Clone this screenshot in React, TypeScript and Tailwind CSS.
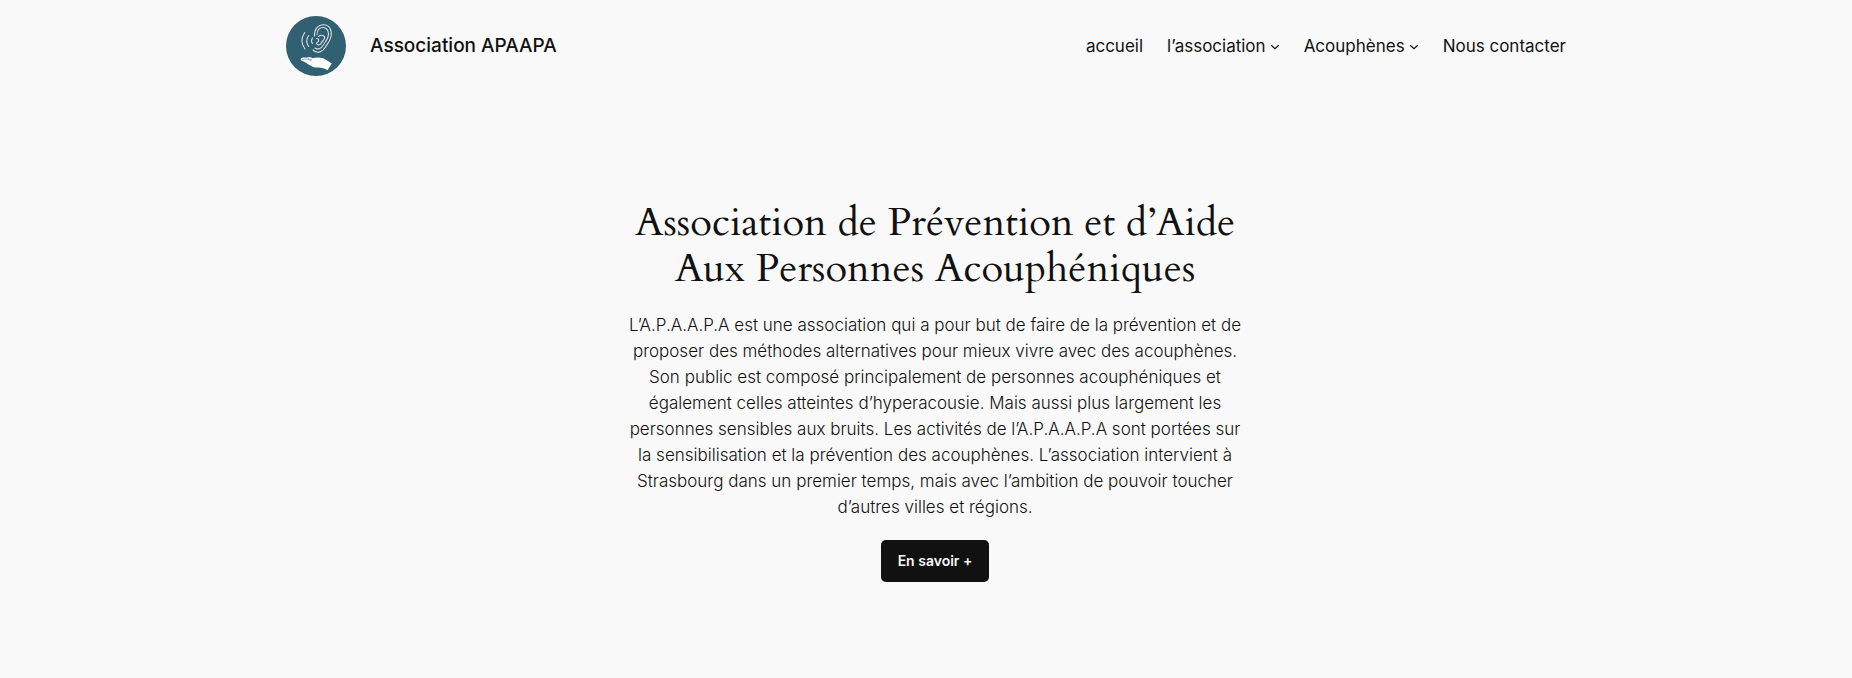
const links = [
  { label: "accueil", submenu: false },
  { label: "l’association", submenu: true },
  { label: "Acouphènes", submenu: true },
  { label: "Nous contacter", submenu: false },
];

function Logo() {
  return (
    <svg viewBox="0 0 60 60" className="size-[60px] shrink-0" role="img" aria-label="Association APAAPA">
      <circle cx="30" cy="30" r="30" fill="#306071" />
      <g fill="none" stroke="#d3dee2" strokeWidth="1.1" strokeLinecap="round">
        <path d="M28.500 20C28 13.500 32 8.700 37.500 8.700C43.500 8.700 46.300 14 45 20.500C44.300 25 42 27 39.500 31C37 35.500 31.500 38.500 27 34" />
        <path d="M31 18.500C31 13.500 34 11.300 37.500 11.500C42 12 43.300 17 42 21C41 24.500 38.500 26.500 37 29.500C35 33 31.500 33.700 29 32" />
        <path d="M32.500 20.500C35 18 39.500 19.500 38.500 22.500C37.500 25 36 25 35 27.500C34 29.500 31.500 29.300 30.500 27.500" />
        <path d="M30.500 22.500C33.500 22.500 33.500 25.500 31 26.500" />
        <path d="M26.500 22Q24.500 24.800 26.500 27.500" />
        <path d="M22.700 19.500Q18.700 25 22.700 30.500" />
        <path d="M18.700 16.500Q13 25 19 33" />
      </g>
      <path
        d="M15.200 42.200C18 41 20 42 21.500 41.500C23 40.300 25 41.300 26.500 42.200C30 41 34 41.200 38 42.500L45.800 47.500L41.500 54.300C38 51.500 34 52 29.500 51.500C25 51 20.500 46.500 16.500 45C14.500 44.500 14.200 43 15.200 42.200Z"
        fill="#fff"
      />
      <path d="M16 43.500C20 42.500 23 43 25.500 45M22 42.500L26 44" fill="none" stroke="#306071" strokeWidth=".5" />
    </svg>
  );
}

function SubmenuButton({ label }: { label: string }) {
  return (
    <button type="button" aria-label={`Sous-menu de ${label}`}>
      <svg viewBox="0 0 12 12" className="mt-0.5 size-[10px]" fill="none" stroke="currentColor" strokeWidth="1.5">
        <path d="M1.500 4L6 8l4.500-4" />
      </svg>
    </button>
  );
}

export default function App() {
  return (
    <div className="min-h-screen bg-[#f9f9f9] font-['Inter',sans-serif] text-[#111]">
      <header className="mx-auto flex max-w-[1280px] flex-wrap items-center justify-between gap-4 py-4">
        <div className="flex items-center gap-6">
          <Logo />
          <a href="#" className="text-[19px] leading-6 font-medium">
            Association APAAPA
          </a>
        </div>
        <nav aria-label="Navigation principale">
          <ul className="flex flex-wrap items-center gap-6 text-[17px] leading-6">
            {links.map((link) => (
              <li key={link.label} className="flex items-center gap-1">
                <a href="#">{link.label}</a>
                {link.submenu && <SubmenuButton label={link.label} />}
              </li>
            ))}
          </ul>
        </nav>
      </header>

      <main className="flex justify-center pt-[108px] pb-16 pl-[18px]">
        <section className="flex max-w-[620px] flex-col items-center text-center">
          <h1 className="font-['Cardo','Liberation_Serif',serif] text-[40px] leading-[46px]">
            Association de Prévention et d’Aide Aux Personnes Acouphéniques
          </h1>
          <p className="mt-5 text-[17px] leading-[26px] font-light">
            L’A.P.A.A.P.A est une association qui a pour but de faire de la prévention et de proposer des méthodes
            alternatives pour mieux vivre avec des acouphènes. Son public est composé principalement de personnes
            acouphéniques et également celles atteintes d’hyperacousie. Mais aussi plus largement les personnes
            sensibles aux bruits. Les activités de l’A.P.A.A.P.A sont portées sur la sensibilisation et la prévention
            des acouphènes. L’association intervient à Strasbourg dans un premier temps, mais avec l’ambition de
            pouvoir toucher d’autres villes et régions.
          </p>
          <a href="#" className="mt-5 rounded-[5px] bg-[#111] px-[17px] py-[11px] text-sm leading-5 font-semibold text-[#f9f9f9]">
            En savoir +
          </a>
        </section>
      </main>
    </div>
  );
}
